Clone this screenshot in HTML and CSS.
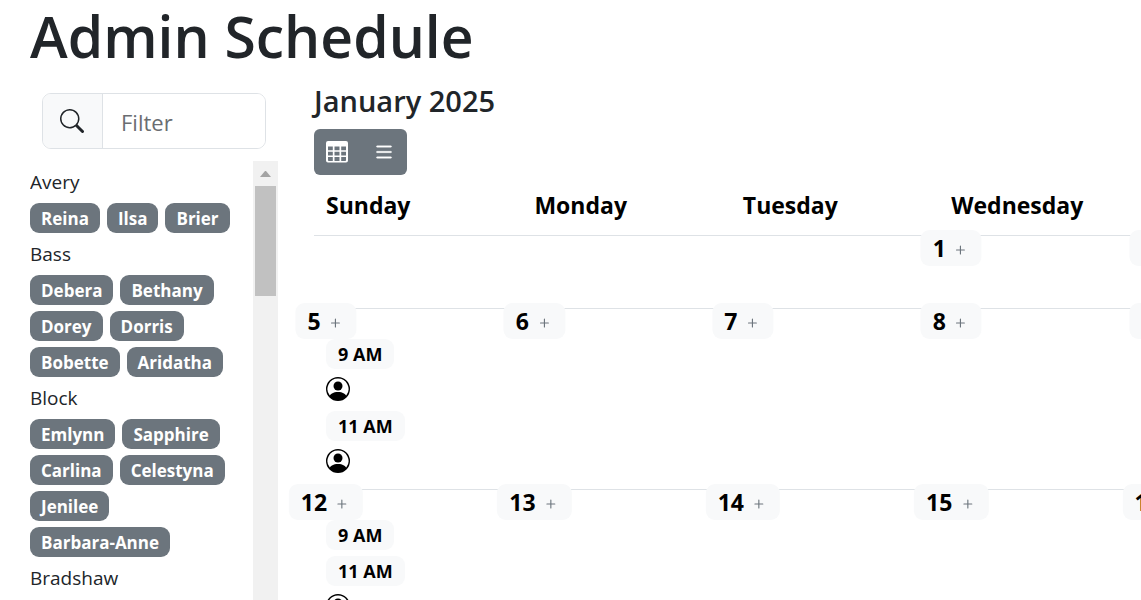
FILE: index.html
```
<!DOCTYPE html>
<html lang="en">
<head>
    <meta charset="UTF-8">
    <meta name="viewport" content="width=device-width, initial-scale=1.0">
    <title>Admin Schedule</title>
    <link rel="stylesheet" href="styles.css">
</head>
<body>

    <!-- Shared icons -->
    <svg class="sprite" aria-hidden="true">
        <symbol id="plus" viewBox="0 0 16 16">
            <path d="M8 4a.5.5 0 0 1 .5.5v3h3a.5.5 0 0 1 0 1h-3v3a.5.5 0 0 1-1 0v-3h-3a.5.5 0 0 1 0-1h3v-3A.5.5 0 0 1 8 4"/>
        </symbol>
        <symbol id="person" viewBox="0 0 16 16">
            <path d="M11 6a3 3 0 1 1-6 0 3 3 0 0 1 6 0"/>
            <path fill-rule="evenodd" d="M0 8a8 8 0 1 1 16 0A8 8 0 0 1 0 8m8-7a7 7 0 0 0-5.468 11.37C3.242 11.226 4.805 10 8 10s4.757 1.225 5.468 2.37A7 7 0 0 0 8 1"/>
        </symbol>
    </svg>

    <h1>Admin Schedule</h1>

    <div class="layout">
        <!-- Sidebar -->
        <aside class="sidebar">
            <div class="input-group">
                <label class="input-group-text" for="filter" aria-label="Filter">
                    <svg class="icon" viewBox="0 0 16 16"><path d="M11.742 10.344a6.5 6.5 0 1 0-1.397 1.398h-.001q.044.06.098.115l3.85 3.85a1 1 0 0 0 1.415-1.414l-3.85-3.85a1 1 0 0 0-.115-.1zM12 6.5a5.5 5.5 0 1 1-11 0 5.5 5.5 0 0 1 11 0"/></svg>
                </label>
                <input type="text" id="filter" placeholder="Filter">
            </div>
            <div class="people">
                <div class="people-list">
                    <div class="family">Avery</div>
                    <div class="names">
                        <span class="badge">Reina</span>
                        <span class="badge">Ilsa</span>
                        <span class="badge">Brier</span>
                    </div>
                    <div class="family">Bass</div>
                    <div class="names">
                        <span class="badge">Debera</span>
                        <span class="badge">Bethany</span>
                        <span class="badge">Dorey</span>
                        <span class="badge">Dorris</span>
                        <span class="badge">Bobette</span>
                        <span class="badge">Aridatha</span>
                    </div>
                    <div class="family">Block</div>
                    <div class="names">
                        <span class="badge">Emlynn</span>
                        <span class="badge">Sapphire</span>
                        <span class="badge">Carlina</span>
                        <span class="badge">Celestyna</span>
                        <span class="badge">Jenilee</span>
                        <span class="badge">Barbara-Anne</span>
                    </div>
                    <div class="family">Bradshaw</div>
                </div>
                <div class="scrollbar" aria-hidden="true">
                    <div class="scroll-up"></div>
                    <div class="scroll-thumb"></div>
                </div>
            </div>
        </aside>

        <!-- Calendar -->
        <main class="calendar">
            <h2>January 2025</h2>
            <div class="btn-group">
                <button type="button" class="btn" aria-label="Month view">
                    <svg class="icon" viewBox="0 0 22 22"><path fill-rule="evenodd" d="M2 0h18a2 2 0 0 1 2 2v17.500a2 2 0 0 1-2 2H2a2 2 0 0 1-2-2V2a2 2 0 0 1 2-2zM2 5.500v3.700h4.800V5.500zm6.500 0v3.700h5V5.500zm6.700 0v3.700H20V5.500zM2 10.700v3.700h4.800v-3.700zm6.500 0v3.700h5v-3.700zm6.700 0v3.700H20v-3.700zM2 16v3.200q0 .8.800.8h4v-4zm6.500 0v4h5v-4zm6.700 0v4h4q.8 0 .8-.8V16z"/></svg>
                </button>
                <button type="button" class="btn" aria-label="List view">
                    <svg class="icon" viewBox="0 0 16 16"><path fill-rule="evenodd" d="M2.500 12a.5.5 0 0 1 .5-.5h10a.5.5 0 0 1 0 1H3a.5.5 0 0 1-.5-.5m0-4a.5.5 0 0 1 .5-.5h10a.5.5 0 0 1 0 1H3a.5.5 0 0 1-.5-.5m0-4a.5.5 0 0 1 .5-.5h10a.5.5 0 0 1 0 1H3a.5.5 0 0 1-.5-.5" stroke="currentColor" stroke-width=".3"/></svg>
                </button>
            </div>
            <table>
                <thead>
                    <tr>
                        <th>Sunday</th>
                        <th>Monday</th>
                        <th>Tuesday</th>
                        <th>Wednesday</th>
                        <th>Thursday</th>
                        <th>Friday</th>
                        <th>Saturday</th>
                    </tr>
                </thead>
                <tbody>
                    <tr>
                        <td></td>
                        <td></td>
                        <td></td>
                        <td><span class="day">1 <svg class="plus"><use href="#plus"/></svg></span></td>
                        <td><span class="day">2 <svg class="plus"><use href="#plus"/></svg></span></td>
                        <td><span class="day">3 <svg class="plus"><use href="#plus"/></svg></span></td>
                        <td><span class="day">4 <svg class="plus"><use href="#plus"/></svg></span></td>
                    </tr>
                    <tr>
                        <td>
                            <span class="day">5 <svg class="plus"><use href="#plus"/></svg></span>
                            <div class="slot"><span class="badge time">9 AM</span></div>
                            <div class="slot"><svg class="icon"><use href="#person"/></svg></div>
                            <div class="slot"><span class="badge time">11 AM</span></div>
                            <div class="slot"><svg class="icon"><use href="#person"/></svg></div>
                        </td>
                        <td><span class="day">6 <svg class="plus"><use href="#plus"/></svg></span></td>
                        <td><span class="day">7 <svg class="plus"><use href="#plus"/></svg></span></td>
                        <td><span class="day">8 <svg class="plus"><use href="#plus"/></svg></span></td>
                        <td><span class="day">9 <svg class="plus"><use href="#plus"/></svg></span></td>
                        <td><span class="day">10 <svg class="plus"><use href="#plus"/></svg></span></td>
                        <td><span class="day">11 <svg class="plus"><use href="#plus"/></svg></span></td>
                    </tr>
                    <tr>
                        <td>
                            <span class="day">12 <svg class="plus"><use href="#plus"/></svg></span>
                            <div class="slot"><span class="badge time">9 AM</span></div>
                            <div class="slot"><span class="badge time">11 AM</span></div>
                            <div class="slot"><svg class="icon"><use href="#person"/></svg></div>
                        </td>
                        <td><span class="day">13 <svg class="plus"><use href="#plus"/></svg></span></td>
                        <td><span class="day">14 <svg class="plus"><use href="#plus"/></svg></span></td>
                        <td><span class="day">15 <svg class="plus"><use href="#plus"/></svg></span></td>
                        <td><span class="day">16 <svg class="plus"><use href="#plus"/></svg></span></td>
                        <td><span class="day">17 <svg class="plus"><use href="#plus"/></svg></span></td>
                        <td><span class="day">18 <svg class="plus"><use href="#plus"/></svg></span></td>
                    </tr>
                </tbody>
            </table>
        </main>
    </div>

</body>
</html>
```
FILE: styles.css
```
* {
    box-sizing: border-box;
}
body {
    display: flex;
    flex-direction: column;
    height: 100vh;
    margin: 0;
    overflow: hidden;
    font-family: "Segoe UI", "Open Sans", sans-serif;
    font-size: 19px;
    color: #212529;
    background-color: #fff;
}
.sprite {
    display: none;
}
h1 {
    margin: 0;
    padding: 0 30px;
    font-size: 57px;
    font-weight: 600;
    line-height: 72px;
}
.layout {
    display: flex;
    flex: 1;
    min-height: 0;
}
.icon {
    display: block;
    width: 24px;
    height: 24px;
    fill: currentColor;
}

/* Sidebar */
.sidebar {
    display: flex;
    flex-direction: column;
    flex: none;
    width: 278px;
    padding-left: 30px;
}
.input-group {
    display: flex;
    height: 56px;
    margin: 21px 12px 12px;
    border: 1px solid #dee2e6;
    border-radius: 9px;
    overflow: hidden;
}
.input-group-text {
    display: flex;
    align-items: center;
    padding: 0 18px 0 17px;
    background-color: #f8f9fa;
    border-right: 1px solid #dee2e6;
}
.input-group input {
    flex: 1;
    min-width: 0;
    padding: 2px 18px 0;
    border: none;
    font-family: inherit;
    font-size: 22px;
    color: #212529;
}
.input-group input::placeholder {
    color: #6a6d71;
}
.people {
    display: flex;
    flex: 1;
    min-height: 0;
}
.people-list {
    flex: 1;
    overflow: hidden;
}
.family {
    padding-top: 3px;
    line-height: 36px;
}
.names {
    display: flex;
    flex-wrap: wrap;
    gap: 6px 7px;
    padding-top: 3px;
}
.badge {
    display: inline-block;
    padding: 1px 11px 0;
    font-size: 17px;
    font-weight: 700;
    line-height: 29px;
    color: #fff;
    background-color: #6c757d;
    border-radius: 9px;
}
.scrollbar {
    width: 25px;
    background-color: #f1f1f1;
}
.scroll-up {
    width: 11px;
    height: 16px;
    margin: 0 auto 9px;
    border: 5px solid transparent;
    border-bottom: 6px solid #a3a3a3;
}
.scroll-thumb {
    height: 110px;
    margin: 0 2px;
    background-color: #c1c1c1;
}

/* Calendar */
.calendar {
    flex: 1;
    min-width: 0;
    padding-left: 36px;
}
h2 {
    margin: 9px 0;
    font-size: 29px;
    font-weight: 600;
    line-height: 39px;
}
.btn-group {
    display: flex;
    gap: 1px;
    width: fit-content;
    height: 46px;
    background-color: #6c757d;
    border-radius: 6px;
    overflow: hidden;
}
.btn {
    padding: 0 12px;
    background: none;
    border: none;
    color: #fff;
    cursor: pointer;
}
.btn .icon {
    width: 22px;
    height: 22px;
}
table {
    table-layout: fixed;
    width: 100%;
    min-width: 1459px;
    border-collapse: separate;
    border-spacing: 0;
    color: #000;
}
th {
    padding: 12px;
    font-size: 23px;
    line-height: 36px;
    text-align: left;
    border-bottom: 1px solid #dee2e6;
}
td {
    position: relative;
    height: 73px;
    padding: 27px 12px 9px;
    vertical-align: top;
    border-bottom: 1px solid #dee2e6;
}
.day {
    position: absolute;
    top: -6px;
    left: 12px;
    display: flex;
    align-items: center;
    gap: 6px;
    padding: 0 12px;
    font-size: 23px;
    font-weight: 700;
    line-height: 36px;
    background-color: #f8f9fa;
    border-radius: 9px;
    transform: translateX(-50%);
}
.plus {
    width: 18px;
    height: 18px;
    margin-top: 3px;
    fill: #6c757d;
}
.slot {
    display: flex;
    align-items: center;
    height: 36px;
}
.slot .icon {
    margin-bottom: 3px;
}
.time {
    padding: 1px 12px 0;
    font-size: 18px;
    color: #000;
    background-color: #f8f9fa;
}
```
